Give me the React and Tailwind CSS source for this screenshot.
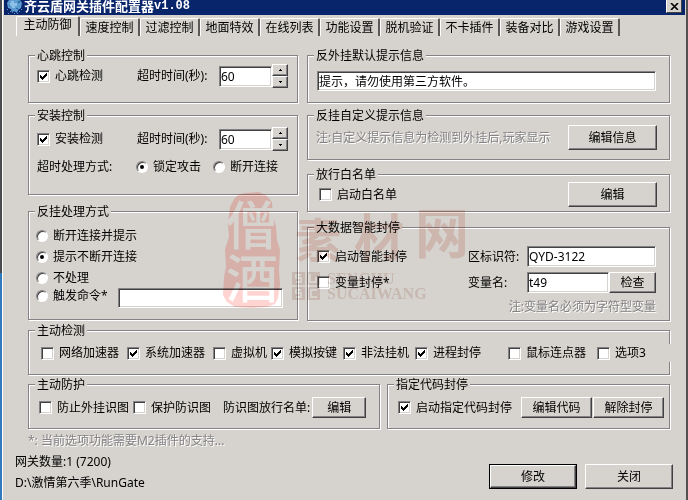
import React, { useState } from 'react';
import clsx from 'clsx';

const TABS = ['主动防御', '速度控制', '过滤控制', '地面特效', '在线列表', '功能设置', '脱机验证', '不卡插件', '装备对比', '游戏设置'];

const DETECTIONS = [
  { label: '网络加速器', checked: false, gap: 'ml-[12px]' },
  { label: '系统加速器', checked: true, gap: 'ml-[8px]' },
  { label: '虚拟机', checked: false, gap: 'ml-[8px]' },
  { label: '模拟按键', checked: true, gap: 'ml-[4px]' },
  { label: '非法挂机', checked: true, gap: 'ml-[6px]' },
  { label: '进程封停', checked: true, gap: 'ml-[6px]' },
  { label: '鼠标连点器', checked: false, gap: 'ml-[27px]' },
];

const PUNISHMENTS = ['断开连接并提示', '提示不断开连接', '不处理'];

export default function App() {
  const [tab, setTab] = useState(0);

  return (
    <div className="flex min-h-screen bg-[#d6d3ce] font-['Noto_Sans','Noto_Sans_CJK_SC',sans-serif] text-[12px] leading-[16px] text-black">
      {/* desktop strip left of the window */}
      <div className="flex w-[2px] shrink-0 flex-col">
        <div className="h-[273px] bg-[#4a4a4f]" />
        <div className="flex-1 bg-[#3179bd]" />
      </div>

      <div className="relative flex min-w-0 flex-1 flex-col border-r-2 border-l border-r-[#52514f] border-l-white pr-px">
        <TitleBar />

        <div role="tablist" className="flex items-end pt-px pl-[13px]">
          {TABS.map((name, i) => (
            <button
              key={name}
              role="tab"
              aria-selected={tab === i}
              onClick={() => setTab(i)}
              className={clsx(
                'rounded-t-[2px] border-t border-r-2 border-l border-t-white border-r-[#5a5957] border-l-white text-center whitespace-nowrap',
                tab === i ? 'h-[20px] w-[64px] pb-[3px]' : 'h-[18px] w-[60px] pt-px'
              )}
            >
              {name}
            </button>
          ))}
        </div>

        <main className="flex flex-1 flex-col pt-[12px] pr-[15px] pl-[25px]">
          <div className="flex items-start gap-[9px]">
            <div className="w-[270px] shrink-0">
              <Group title="心跳控制" pad="pt-px pb-[14px] pl-[8px]">
                <TimeoutRow label="心跳检测" name="heartbeat" />
              </Group>

              <Group title="安装控制" className="mt-[5px]" pad="pt-[4px] pb-[19px] pl-[8px]">
                <TimeoutRow label="安装检测" name="install" />
                <div className="mt-[8px] flex items-center">
                  <span className="w-[99px]">超时处理方式:</span>
                  <Radio name="timeout" label="锁定攻击" checked />
                  <Radio name="timeout" label="断开连接" className="ml-[12px]" />
                </div>
              </Group>

              <Group title="反挂处理方式" className="mt-[9px]" pad="pt-[6px] pr-[14px] pb-[11px] pl-[7px]">
                {PUNISHMENTS.map((name, i) => (
                  <div key={name} className="flex h-[21px] items-center">
                    <Radio name="punish" label={name} checked={i === 1} />
                  </div>
                ))}
                <div className="flex items-start gap-[10px]">
                  <Radio name="punish" label="触发命令*" />
                  <TextBox label="触发命令" value="" className="h-[20px] min-w-0 flex-1" />
                </div>
              </Group>
            </div>

            <div className="min-w-0 flex-1">
              <Group title="反外挂默认提示信息" pad="pt-[8px] pr-[13px] pb-[11px] pl-[9px]">
                <TextBox label="默认提示信息" value="提示，请勿使用第三方软件。" className="block h-[20px] w-full" />
              </Group>

              <Group title="反挂自定义提示信息" className="mt-[5px]" pad="pt-[2px] pr-[12px] pb-[9px] pl-[8px]">
                <div className="flex items-center justify-between">
                  <Hint>注:自定义提示信息为检测到外挂后,玩家显示</Hint>
                  <Button className="h-[25px] w-[89px]">编辑信息</Button>
                </div>
              </Group>

              <Group title="放行白名单" className="mt-[7px]" pad="pr-[12px] pb-[4px] pl-[11px]">
                <div className="flex items-center justify-between">
                  <Check label="启动白名单" />
                  <Button className="h-[25px] w-[89px]">编辑</Button>
                </div>
              </Group>

              <Group title="大数据智能封停" className="mt-[8px]" pad="pt-[11px] pr-[13px] pb-[5px] pl-[9px]">
                <div className="flex h-[21px] items-center">
                  <Check label="启动智能封停" checked className="flex-1" />
                  <label htmlFor="zone" className="w-[59px]">区标识符:</label>
                  <TextBox id="zone" value="QYD-3122" className="h-[21px] w-[129px]" />
                </div>
                <div className="mt-[5px] flex h-[21px] items-center">
                  <Check label="变量封停*" className="flex-1" />
                  <label htmlFor="variable" className="w-[59px]">变量名:</label>
                  <TextBox id="variable" value="t49" className="h-[21px] w-[82px]" />
                  <Button className="h-[21px] w-[47px]">检查</Button>
                </div>
                <div className="mt-[6px] text-right">
                  <Hint>注:变量名必须为字符型变量</Hint>
                </div>
              </Group>
            </div>
          </div>

          <Group title="主动检测" className="mt-[2px]" pad="pt-[6px] pb-[12px]">
            <div className="flex h-[18px] items-center">
              {DETECTIONS.map((d) => (
                <Check key={d.label} label={d.label} checked={d.checked} className={d.gap} />
              ))}
              <Check label="选项3" className="-mr-[2px] ml-[11px] h-[18px] flex-1 bg-[#d6d3ce]" />
            </div>
          </Group>

          <div className="mt-[2px] flex gap-[7px]">
            <Group title="主动防护" className="w-[352px] shrink-0" pad="pt-[5px] pb-[10px] pl-[10px]">
              <div className="flex items-center">
                <Check label="防止外挂识图" />
                <Check label="保护防识图" className="ml-[4px]" />
                <span className="mr-[2px] ml-[12px]">防识图放行名单:</span>
                <Button className="h-[21px] w-[54px]">编辑</Button>
              </div>
            </Group>
            <Group title="指定代码封停" className="flex-1" pad="pt-[5px] pr-[5px] pb-[10px] pl-[10px]">
              <div className="flex items-center">
                <Check label="启动指定代码封停" checked className="flex-1" />
                <Button className="h-[21px] w-[71px]">编辑代码</Button>
                <Button className="ml-px h-[21px] w-[71px]">解除封停</Button>
              </div>
            </Group>
          </div>

          <div className="mt-[4px]">
            <Hint>*: 当前选项功能需要M2插件的支持...</Hint>
          </div>

          <footer className="mt-[5px] -mr-[3px] -ml-[13px] flex items-start justify-between">
            <div>
              <p>网关数量:1 (7200)</p>
              <p className="mt-[5px]">D:\激情第六季\RunGate</p>
            </div>
            <div className="mt-[10px] flex gap-[8px]">
              <div className="border border-black">
                <Button className="h-[23px] w-[86px]">修改</Button>
              </div>
              <Button className="h-[25px] w-[88px]">关闭</Button>
            </div>
          </footer>
        </main>

        <Watermark />
      </div>
    </div>
  );
}

function TitleBar() {
  return (
    <header className="ml-px flex h-[15px] items-start bg-[#08246b] pr-[3px] pl-[2px] text-white">
      <svg width="18" height="15" viewBox="0 0 18 15" aria-hidden="true">
        <path d="M3 0h11l2 3-1 5-3 2-1 3-3-2-2 2-1-4-3-1-1-5z" fill="#5c9bd0" />
        <path d="M5 1h3v2h3v3h-2v2H6V6H4V3h1z" fill="#8cc0e6" />
        <path d="M12 1h2v2h-2zM3 5h1v1H3zM10 8h2v1h-2z" fill="#2f6aa8" />
        <path d="M1 9h1v1H1zM4 11h1v1H4zM2 13h1v1H2zM8 13h1v1H8zM13 11h1v1h-1zM15 9h1v1h-1zM11 13h1v1h-1z" fill="#5c9bd0" />
      </svg>
      <h1 className="flex flex-1 items-center text-[13px] leading-[13px] font-bold whitespace-nowrap">
        齐云盾网关插件配置器
        <span className="font-['Liberation_Mono',monospace] text-[12px]">v1.08</span>
      </h1>
      <button
        aria-label="关闭窗口"
        className="flex h-[13px] w-[16px] items-center justify-center border-r border-b border-l border-r-[#424142] border-b-[#424142] border-l-white bg-[#d6d3ce]"
      >
        <svg width="9" height="7" viewBox="0 0 9 7" stroke="#000" strokeWidth="1.6" aria-hidden="true">
          <path d="M1 0l7 7M8 0L1 7" />
        </svg>
      </button>
    </header>
  );
}

function Group({ title, className, pad, children }) {
  return (
    <fieldset className={clsx('min-w-0 border border-[#848284] shadow-[1px_1px_0_#fff,inset_1px_1px_0_#fff]', className)}>
      <legend className="ml-[6px] bg-[#d6d3ce] px-[2px] leading-[15px]">{title}</legend>
      <div className={pad}>{children}</div>
    </fieldset>
  );
}

function TimeoutRow({ label, name }) {
  return (
    <div className="flex h-[24px] items-center">
      <Check label={label} checked className="w-[100px]" />
      <label htmlFor={name} className="w-[82px]">超时时间(秒):</label>
      <TextBox id={name} value="60" className="h-[21px] w-[53px]" />
      <div className="flex flex-col">
        <SpinButton label="增加" path="M0 2V1h1V0h1v1h1v1z" />
        <SpinButton label="减少" path="M0 0v1h1v1h1V1h1V0z" />
      </div>
    </div>
  );
}

function SpinButton({ label, path }) {
  return (
    <Button label={label} className="h-[12px] w-[16px]">
      <svg width="3" height="2" viewBox="0 0 3 2" aria-hidden="true">
        <path d={path} />
      </svg>
    </Button>
  );
}

function TextBox({ id, label, value, className }) {
  return (
    <input
      id={id}
      type="text"
      aria-label={label}
      defaultValue={value}
      className={clsx(
        'border border-t-[#848284] border-r-white border-b-white border-l-[#848284] bg-white px-px shadow-[inset_1px_1px_0_#424142,inset_-1px_-1px_0_#d6d3ce] outline-none',
        className
      )}
    />
  );
}

function Button({ label, className, children }) {
  return (
    <button
      type="button"
      aria-label={label}
      className={clsx(
        'flex items-center justify-center border border-t-white border-r-[#424142] border-b-[#424142] border-l-white bg-[#d6d3ce] whitespace-nowrap shadow-[inset_-1px_-1px_0_#848284]',
        className
      )}
    >
      {children}
    </button>
  );
}

function Check({ label, checked = false, className }) {
  return (
    <label className={clsx('flex items-center gap-[5px] whitespace-nowrap', className)}>
      <span className="relative h-[13px] w-[13px] shrink-0">
        <input
          type="checkbox"
          defaultChecked={checked}
          className="peer block h-[13px] w-[13px] appearance-none border border-t-[#848284] border-r-white border-b-white border-l-[#848284] bg-white shadow-[inset_1px_1px_0_#424142,inset_-1px_-1px_0_#d6d3ce]"
        />
        <svg viewBox="0 0 13 13" className="pointer-events-none absolute inset-0 hidden peer-checked:block" shapeRendering="crispEdges" aria-hidden="true">
          <path d="M3 5h1v1h1v1h1v-1h1v-1h1v-1h1v-1h1v3h-1v1h-1v1h-1v1h-1v1h-1v-1h-1v-1h-1z" />
        </svg>
      </span>
      {label}
    </label>
  );
}

function Radio({ name, label, checked = false, className }) {
  return (
    <label className={clsx('flex items-center gap-[5px] whitespace-nowrap', className)}>
      <input
        type="radio"
        name={name}
        defaultChecked={checked}
        className="flex h-[12px] w-[12px] shrink-0 appearance-none items-center justify-center rounded-full border border-t-[#848284] border-r-white border-b-white border-l-[#848284] bg-white shadow-[inset_1px_1px_0_#424142] checked:before:h-[4px] checked:before:w-[4px] checked:before:rounded-full checked:before:bg-black"
      />
      {label}
    </label>
  );
}

function Hint({ children }) {
  return <span className="whitespace-nowrap text-[#848284] [text-shadow:1px_1px_0_#fff]">{children}</span>;
}

// Site stamp printed across the form
function Watermark() {
  return (
    <svg
      width="252"
      height="118"
      viewBox="0 0 252 118"
      className="pointer-events-none absolute top-[191px] left-[218px] overflow-visible mix-blend-multiply"
      aria-hidden="true"
    >
      <path
        d="M13 8l4-4 7-2 14-1 8 4 5 6 1 14 3 10 1 14 3 10-1 20 1 14-2 14-3 6-8 3-16 1-16-1-8-5-4-7 1-18 2-10-1-18 4-12-1-14 2-16z"
        fill="#ffd4d1"
      />
      <g fill="#fff" fontFamily="'Noto Sans CJK SC', sans-serif" fontWeight="500" fontSize="52" textAnchor="middle">
        <text x="31" y="54">僧</text>
        <text x="31" y="107">酒</text>
      </g>
      <g fill="#f3dcd7" fontFamily="'Noto Sans CJK SC', sans-serif" fontWeight="700">
        <text x="74" y="66" fontSize="46">素</text>
        <text x="133" y="65" fontSize="50">材</text>
        <text x="194" y="63" fontSize="54">网</text>
      </g>
      <g fill="#eddfdc">
        <path d="M71 81h13v13H71zM86 81h13v13H86zM71 96h13v13H71zM86 96h13v13H86z" />
        <g fontFamily="'Liberation Serif', serif" fontWeight="700" fontSize="16">
          <text x="106" y="93">SENGHU</text>
          <text x="106" y="108">SUCAIWANG</text>
        </g>
      </g>
      <path
        d="M80 84h-5v3h5v4h-5M89 83v8h6v-5M80 99h-5v3h5v4h-5M96 99h-6v7h6"
        fill="none"
        stroke="#fff"
        strokeWidth="2"
      />
    </svg>
  );
}
